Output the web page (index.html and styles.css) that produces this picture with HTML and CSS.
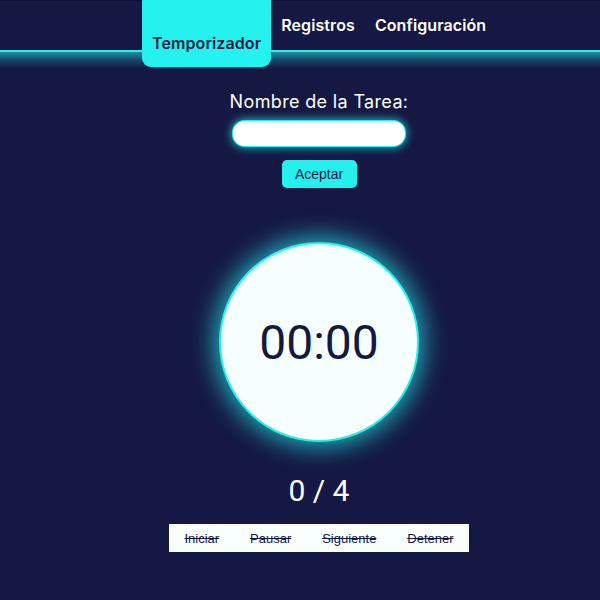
FILE: index.html
```html
<!DOCTYPE html>
<html lang="es">
<head>
<meta charset="utf-8">
<title>Temporizador</title>
<link rel="stylesheet" href="styles.css">
</head>
<body>
<header class="header">
  <nav class="nav">
    <a class="tab active" href="#">Temporizador</a>
    <a class="tab" href="#">Registros</a>
    <a class="tab" href="#">Configuración</a>
  </nav>
</header>
<main class="main">
  <label class="label" for="tarea">Nombre de la Tarea:</label>
  <input class="input" id="tarea" type="text">
  <button class="accept">Aceptar</button>
  <div class="circle"><span class="time">00:00</span></div>
  <div class="counter">0 / 4</div>
  <div class="controls">
    <button class="ctrl">Iniciar</button>
    <button class="ctrl">Pausar</button>
    <button class="ctrl">Siguiente</button>
    <button class="ctrl">Detener</button>
  </div>
</main>
</body>
</html>
```
FILE: styles.css
```css
html, body {
  margin: 0;
  padding: 0;
  background: #151842;
  height: 100%;
}
.header {
  height: 49px;
  border-top: 1px solid #0c0f36;
  border-bottom: 2px solid #25f0ee;
  position: relative;
  z-index: 1;
}
.header::after {
  content: "";
  position: absolute;
  left: 0;
  right: 0;
  top: 100%;
  margin-top: 2px;
  height: 17px;
  background: linear-gradient(rgba(37, 240, 238, 0.55), rgba(37, 240, 238, 0.2) 50%, rgba(37, 240, 238, 0));
}
.nav {
  display: flex;
  align-items: flex-start;
  padding-left: 142px;
  margin-top: -1px;
  position: relative;
  z-index: 2;
}
.tab {
  font-family: Inter, "Open Sans", sans-serif;
  font-weight: 600;
  font-size: 16px;
  letter-spacing: 0.1px;
  line-height: 18px;
  color: #ffffff;
  text-decoration: none;
  padding: 16px 10px 0;
}
.tab.active {
  background: #25f2ee;
  color: #151842;
  height: 33px;
  padding-top: 34px;
  border-radius: 0 0 9px 9px;
}
.main {
  display: flex;
  flex-direction: column;
  align-items: center;
  padding-left: 38px;
}
.label {
  margin-top: 39px;
  font-family: Inter, "Open Sans", sans-serif;
  font-size: 18px;
  letter-spacing: 0.35px;
  line-height: 22px;
  color: #ffffff;
}
.input {
  margin-top: 8px;
  width: 172px;
  height: 25px;
  box-sizing: border-box;
  border: none;
  border-radius: 12px;
  background: #ffffff;
  box-shadow: 0 0 0 1px #25f0ee, 0 0 8px 2px rgba(37, 240, 238, 0.7);
  outline: none;
}
.accept {
  margin-top: 14px;
  width: 75px;
  height: 28px;
  border: none;
  border-radius: 5px;
  background: #25f0ee;
  color: #151842;
  font-family: "Liberation Sans", Arial, sans-serif;
  font-size: 14px;
}
.circle {
  margin-top: 54px;
  width: 200px;
  height: 200px;
  box-sizing: border-box;
  border: 2px solid #25f0ee;
  border-radius: 50%;
  background: #f5fffe;
  box-shadow: 0 0 24px 5px rgba(37, 240, 238, 0.7);
  display: flex;
  align-items: center;
  justify-content: center;
}
.time {
  font-family: Roboto, sans-serif;
  font-size: 48px;
  color: #151842;
}
.counter {
  margin-top: 31px;
  font-family: Roboto, sans-serif;
  font-size: 30px;
  line-height: 35px;
  color: #ffffff;
}
.controls {
  margin-top: 16px;
  display: flex;
  height: 28px;
  width: 300px;
  background: #f8fffe;
}
.ctrl {
  flex: 1 1 auto;
  padding: 0;
  border: none;
  background: transparent;
  font-family: "Liberation Sans", Arial, sans-serif;
  font-size: 13px;
  color: #151842;
  text-decoration: line-through;
}
```
